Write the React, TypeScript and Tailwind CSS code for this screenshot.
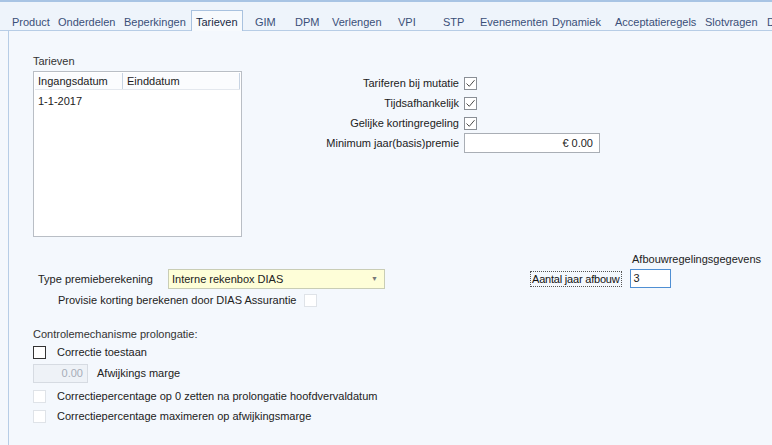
import React from "react";

// tab text starts measured from the screenshot
const tabs = [
  { label: "Product", w: "w-[46px]" },
  { label: "Onderdelen", w: "w-[66px]" },
  { label: "Beperkingen", w: "w-[67px]" },
  { label: "Tarieven", w: "w-[52px]", active: true },
  { label: "GIM", w: "w-[40px]" },
  { label: "DPM", w: "w-[37px]" },
  { label: "Verlengen", w: "w-[66px]" },
  { label: "VPI", w: "w-[45px]" },
  { label: "STP", w: "w-[37px]" },
  { label: "Evenementen", w: "w-[72px]" },
  { label: "Dynamiek", w: "w-[63px]" },
  { label: "Acceptatieregels", w: "w-[90px]" },
  { label: "Slotvragen", w: "w-[62px]" },
  { label: "D", w: "w-[20px]" },
];

function Check({ checked, dark, dim }: { checked?: boolean; dark?: boolean; dim?: boolean }) {
  return (
    <div
      className={
        "w-[13px] h-[13px] bg-white flex items-center justify-center shrink-0 border " +
        (dark ? "border-[#333333]" : dim ? "border-[#dfe3e8]" : "border-[#8a8f96]")
      }
    >
      {checked && (
        <svg width="11" height="11" viewBox="0 0 11 11">
          <path d="M1.5 5.5 L4.3 8.3 L9.5 2.2" fill="none" stroke="#4a4a4a" strokeWidth="1" />
        </svg>
      )}
    </div>
  );
}

function App() {
  return (
    <div
      className="w-[772px] h-[445px] overflow-hidden bg-[#f4f8fd] text-[11px] text-[#222]"
      style={{ fontFamily: '"Liberation Sans", Arial, sans-serif' }}
    >
      {/* top strip */}
      <div className="h-[2px] bg-[#a8c4e4]" />
      <div className="h-[29px] bg-[#eef4fb] flex items-end pl-[12px] border-b border-[#b7cde6]">
        {tabs.map((t) => (
          <div
            key={t.label}
            className={
              "shrink-0 whitespace-nowrap " +
              t.w +
              (t.active
                ? " mr-[12px] h-[21px] mb-[-1px] pl-[4px] pt-[3px] bg-[#f7fafd] border border-b-0 border-[#a9c2df] text-[#1a2a44]"
                : " h-[20px] pt-[4px] text-[#3a4f78]")
            }
          >
            {t.label}
          </div>
        ))}
      </div>
      {/* panel */}
      <div className="ml-[8px] h-[414px] border-l border-[#b7cde6] bg-[#f4f8fd] pl-[24px] pt-[23px]">
        <div className="flex">
          <div className="w-[209px]">
            <div className="h-[14px] leading-[14px] text-[#333]">Tarieven</div>
            <div className="mt-[3px] h-[166px] border border-[#b9bec5] bg-white">
              <div className="flex h-[17px] mx-[1px] mt-[1px] border-b border-[#e4e8ee] bg-[#fbfcfe] text-[#222]">
                <div className="w-[88px] pl-[3px] border-r border-[#c8d4e3] leading-[16px]">Ingangsdatum</div>
                <div className="flex-1 pl-[4px] border-r border-[#c8d4e3] leading-[16px]">Einddatum</div>
              </div>
              <div className="pl-[4px] pt-[4px] leading-[14px]">1-1-2017</div>
            </div>
          </div>
          <div className="ml-[73px] mt-[19px] flex flex-col w-[285px]">
            <div className="flex items-center h-[20px]">
              <div className="flex-1 text-right pr-[5px]">Tariferen bij mutatie</div>
              <div className="w-[136px]"><Check checked /></div>
            </div>
            <div className="flex items-center h-[20px]">
              <div className="flex-1 text-right pr-[5px]">Tijdsafhankelijk</div>
              <div className="w-[136px]"><Check checked /></div>
            </div>
            <div className="flex items-center h-[20px]">
              <div className="flex-1 text-right pr-[5px]">Gelijke kortingregeling</div>
              <div className="w-[136px]"><Check checked /></div>
            </div>
            <div className="flex items-center h-[20px]">
              <div className="flex-1 text-right pr-[5px]">Minimum jaar(basis)premie</div>
              <div className="w-[136px] h-[20px] border border-[#a9aeb5] bg-white text-right pr-[6px] leading-[18px]">
                € 0.00
              </div>
            </div>
          </div>
        </div>

        <div className="flex mt-[15px]">
          <div className="w-[497px] pt-[17px]">
            <div className="flex items-center h-[20px]">
              <div className="w-[135px] pl-[5px]">Type premieberekening</div>
              <div className="w-[217px] h-[20px] border border-[#c9cdb5] bg-[#fefed8] flex items-center pl-[3px] pr-[6px]">
                <span className="flex-1">Interne rekenbox DIAS</span>
                <span className="text-[7px] text-[#777]">▼</span>
              </div>
            </div>
            <div className="flex items-center mt-[5px] h-[13px]">
              <div className="w-[271px] pl-[25px]">Provisie korting berekenen door DIAS Assurantie</div>
              <Check dim />
            </div>
          </div>
          <div className="flex flex-col">
            <div className="ml-[102px] h-[14px] leading-[14px]">Afbouwregelingsgegevens</div>
            <div className="flex items-center mt-[3px]">
              <div className="h-[16px] leading-[14px] px-[1px] border border-dotted border-[#555] text-[#111] tracking-[-0.2px]">
                Aantal jaar afbouw
              </div>
              <div className="ml-[8px] w-[41px] h-[19px] border border-[#4f8fd3] bg-white pl-[3px] leading-[17px]">3</div>
            </div>
          </div>
        </div>

        <div className="mt-[20px] h-[14px] leading-[14px] text-[#333]">Controlemechanisme prolongatie:</div>
        <div className="flex items-center mt-[5px] h-[13px]">
          <Check dark />
          <span className="ml-[11px]">Correctie toestaan</span>
        </div>
        <div className="flex items-center mt-[5px] h-[19px]">
          <div className="w-[55px] h-[19px] border border-[#d6dbe2] bg-[#eef2f7] text-right pr-[4px] text-[#a6adb7] leading-[17px]">
            0.00
          </div>
          <span className="ml-[9px]">Afwijkings marge</span>
        </div>
        <div className="flex items-center mt-[7px] h-[13px]">
          <Check dim />
          <span className="ml-[11px]">Correctiepercentage op 0 zetten na prolongatie hoofdvervaldatum</span>
        </div>
        <div className="flex items-center mt-[7px] h-[13px]">
          <Check dim />
          <span className="ml-[11px]">Correctiepercentage maximeren op afwijkingsmarge</span>
        </div>
      </div>
    </div>
  );
}

export default App;
